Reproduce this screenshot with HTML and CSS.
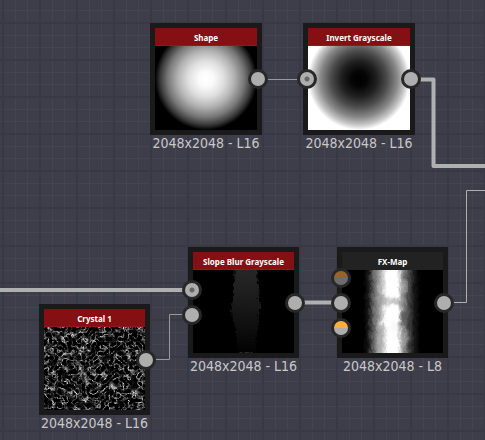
FILE: index.html
```html
<!DOCTYPE html>
<html lang="en">
<head>
<meta charset="utf-8">
<meta name="viewport" content="width=device-width, initial-scale=1">
<title>Node graph</title>
<link rel="stylesheet" href="styles.css">
</head>
<body>
<main class="canvas">
  <svg class="layer" aria-hidden="true">
    <defs>
      <pattern id="grid" x="2" y="22" width="371" height="371" patternUnits="userSpaceOnUse">
        <path class="grid-minor" d="M13.500 0V371M25.500 0V371M50.500 0V371M62.500 0V371M87.500 0V371M99.500 0V371M124.500 0V371M136.500 0V371M161.500 0V371M173.500 0V371M198.500 0V371M210.500 0V371M236.500 0V371M248.500 0V371M273.500 0V371M285.500 0V371M310.500 0V371M322.500 0V371M347.500 0V371M359.500 0V371M0 13.500H371M0 25.500H371M0 50.500H371M0 62.500H371M0 87.500H371M0 99.500H371M0 124.500H371M0 136.500H371M0 161.500H371M0 173.500H371M0 198.500H371M0 210.500H371M0 236.500H371M0 248.500H371M0 273.500H371M0 285.500H371M0 310.500H371M0 322.500H371M0 347.500H371M0 359.500H371"/>
        <path class="grid-major" d="M1 0V371M38 0V371M75 0V371M112 0V371M149 0V371M186 0V371M224 0V371M261 0V371M298 0V371M335 0V371M0 1H371M0 38H371M0 75H371M0 112H371M0 149H371M0 186H371M0 224H371M0 261H371M0 298H371M0 335H371"/>
      </pattern>
    </defs>
    <rect width="100%" height="100%" fill="url(#grid)"/>
    <path class="wire" d="M257 79.500H308"/>
    <path class="wire wire-thick" d="M410 79.500H433.500V166H2000"/>
    <path class="wire wire-thick" d="M0 290H192"/>
    <path class="wire" d="M146 359.500H169.500V314.500H192"/>
    <path class="wire wire-thick" d="M294 302.500H341"/>
    <path class="wire wire-light" d="M443 302.500H466.500V190.500H2000"/>
  </svg>

  <article class="node node-shape">
    <div class="body">
      <svg class="preview" viewBox="0 0 102 102" aria-hidden="true">
        <defs><radialGradient id="ball"><stop offset="0" stop-color="#fff"/><stop offset=".15" stop-color="#fafafa"/><stop offset=".35" stop-color="#dfdfdf"/><stop offset=".55" stop-color="#b3b3b3"/><stop offset=".75" stop-color="#777"/><stop offset=".9" stop-color="#383838"/><stop offset="1" stop-color="#000"/></radialGradient></defs>
        <rect width="102" height="102" fill="#000"/><circle cx="51" cy="51" r="51" fill="url(#ball)"/>
      </svg>
      <h2 class="title">Shape</h2>
    </div>
    <div class="ports outputs"><button class="port" type="button" aria-label="Output"></button></div>
    <p class="info">2048x2048 - L16</p>
  </article>

  <article class="node node-invert">
    <div class="body">
      <svg class="preview" viewBox="0 0 102 102" aria-hidden="true">
        <defs><radialGradient id="hole"><stop offset="0" stop-color="#000"/><stop offset=".15" stop-color="#050505"/><stop offset=".35" stop-color="#202020"/><stop offset=".55" stop-color="#4c4c4c"/><stop offset=".75" stop-color="#888"/><stop offset=".9" stop-color="#c7c7c7"/><stop offset="1" stop-color="#fff"/></radialGradient></defs>
        <rect width="102" height="102" fill="#fff"/><circle cx="51" cy="51" r="51" fill="url(#hole)"/>
      </svg>
      <h2 class="title">Invert Grayscale</h2>
    </div>
    <div class="ports inputs"><button class="port port-primary" type="button" aria-label="Input"></button></div>
    <div class="ports outputs"><button class="port" type="button" aria-label="Output"></button></div>
    <p class="info">2048x2048 - L16</p>
  </article>

  <article class="node node-small node-blur">
    <div class="body">
      <svg class="preview" viewBox="0 0 102 102" aria-hidden="true">
        <defs>
          <linearGradient id="dim" x2="0" y2="1"><stop offset="0" stop-color="#2c2c2c"/><stop offset=".35" stop-color="#202020"/><stop offset=".7" stop-color="#101010"/><stop offset="1" stop-color="#010101"/></linearGradient>
          <filter id="ragged" x="-20%" width="140%" color-interpolation-filters="sRGB"><feTurbulence baseFrequency=".3" numOctaves="2" seed="4"/><feDisplacementMap in="SourceGraphic" scale="5" xChannelSelector="R" yChannelSelector="G"/></filter>
        </defs>
        <rect width="102" height="102" fill="#000"/>
        <path fill="url(#dim)" filter="url(#ragged)" d="M42 0H63L64 25L66 45L67 55L65 68L63 85L62 102H44L42 80L38 62L37 55L40 40Z"/>
        <path stroke="#292929" stroke-dasharray="3 2 5 1" d="M47 101.500H60"/>
      </svg>
      <h2 class="title">Slope Blur Grayscale</h2>
    </div>
    <div class="ports inputs"><button class="port port-primary" type="button" aria-label="Grayscale input"></button><button class="port" type="button" aria-label="Slope input"></button></div>
    <div class="ports outputs"><button class="port" type="button" aria-label="Output"></button></div>
    <p class="info">2048x2048 - L16</p>
  </article>

  <article class="node node-small node-fx">
    <div class="body">
      <svg class="preview" viewBox="0 0 102 102" aria-hidden="true">
        <defs>
          <linearGradient id="beam"><stop offset=".27" stop-color="#000"/><stop offset=".31" stop-color="#181818"/><stop offset=".35" stop-color="#606060"/><stop offset=".41" stop-color="#b4b4b4"/><stop offset=".46" stop-color="#fff"/><stop offset=".55" stop-color="#fff"/><stop offset=".59" stop-color="#9c9c9c"/><stop offset=".64" stop-color="#4c4c4c"/><stop offset=".69" stop-color="#151515"/><stop offset=".74" stop-color="#000"/></linearGradient>
          <filter id="rough" x="0" y="0" width="1" height="1" color-interpolation-filters="sRGB"><feTurbulence baseFrequency=".2 .1" numOctaves="2" seed="9"/><feDisplacementMap in="SourceGraphic" scale="4" xChannelSelector="R" yChannelSelector="G"/></filter>
          <filter id="soft" x="-50%" y="-50%" width="200%" height="200%"><feGaussianBlur stdDeviation="1.500"/></filter>
        </defs>
        <rect width="102" height="102" fill="#000"/>
        <g filter="url(#rough)">
          <rect x="-12" y="-10" width="122" height="122" fill="url(#beam)"/>
          <path fill="#888" opacity=".5" filter="url(#soft)" d="M36 44H46V53H36ZM47 46H62V53H47ZM50 68L57 72V78H48Z"/>
          <path fill="#fff" opacity=".9" filter="url(#soft)" d="M44 56L55 53L56 72L58 102H45L43 84L46 76L36 70L44 66Z"/>
          <path fill="#aaa" opacity=".5" filter="url(#soft)" d="M35 71L43 76L42 102H33ZM59 28H64V40H59ZM57 78H65V96H58Z"/>
          <path fill="#4a4a4a" opacity=".6" filter="url(#soft)" d="M58 58H65V73H58Z"/>
        </g>
      </svg>
      <h2 class="title title-dark">FX-Map</h2>
    </div>
    <div class="ports inputs"><button class="port port-mixed-dim" type="button" aria-label="Background input"></button><button class="port" type="button" aria-label="Pattern input 1"></button><button class="port port-mixed" type="button" aria-label="Pattern input 2"></button></div>
    <div class="ports outputs"><button class="port" type="button" aria-label="Output"></button></div>
    <p class="info">2048x2048 - L8</p>
  </article>

  <article class="node node-small node-crystal">
    <div class="body">
      <svg class="preview" viewBox="0 0 102 102" aria-hidden="true">
        <filter id="crystal" x="0" y="0" width="1" height="1" color-interpolation-filters="sRGB">
          <feTurbulence type="turbulence" baseFrequency=".21" numOctaves="2" seed="7"/>
          <feColorMatrix values="-2.500 0 0 0 .8  -2.500 0 0 0 .8  -2.500 0 0 0 .8  0 0 0 0 1" result="lines"/>
          <feTurbulence type="fractalNoise" baseFrequency=".17" numOctaves="3" seed="21"/>
          <feColorMatrix values="0 3 0 0 -1.050  0 3 0 0 -1.050  0 3 0 0 -1.050  0 0 0 0 1" result="mask"/>
          <feComposite in="lines" in2="mask" operator="arithmetic" k1=".95" k2=".16" k3="0" k4="0"/>
        </filter>
        <rect width="102" height="102" filter="url(#crystal)"/>
      </svg>
      <h2 class="title">Crystal 1</h2>
    </div>
    <div class="ports outputs"><button class="port" type="button" aria-label="Output"></button></div>
    <p class="info">2048x2048 - L16</p>
  </article>
</main>
</body>
</html>
```
FILE: styles.css
```css
* {
  box-sizing: border-box;
}

body {
  margin: 0;
  background: #3e3d4a;
}

.canvas {
  position: relative;
  min-height: 100vh;
  overflow: hidden;
  font-family: "Noto Sans", "Open Sans", sans-serif;
}

.layer {
  position: absolute;
  inset: 0;
  width: 100%;
  height: 100%;
}

.grid-minor,
.grid-major {
  fill: none;
  stroke: #454450;
  stroke-width: 1;
}

.grid-major {
  stroke: #393845;
  stroke-width: 2;
}

.wire {
  fill: none;
  stroke: #98989e;
  stroke-width: 1;
  stroke-linejoin: round;
}

.wire-light {
  stroke: #b0b0b0;
}

.wire-thick {
  stroke: #b0b0b0;
  stroke-width: 4;
}

/* Nodes are placed freely on the canvas */
.node {
  --size: 112px;
  position: absolute;
  width: var(--size);
}

.node-small {
  --size: 111px;
}

.node-shape { left: 150px; top: 23px; }
.node-invert { left: 303px; top: 23px; }
.node-blur { left: 188px; top: 247px; }
.node-fx { left: 337px; top: 247px; }
.node-crystal { left: 39px; top: 304px; }

.body {
  position: relative;
  height: var(--size);
  border: 5px solid #1a1a1a;
}

.preview {
  display: block;
  width: 100%;
  height: 100%;
}

.title {
  position: absolute;
  inset: 0 0 auto;
  height: 18px;
  margin: 0;
  border-bottom: 1px solid #8c1a1f;
  background: #850f13;
  color: #fff;
  font-size: 8px;
  line-height: 20px;
  font-weight: 700;
  text-align: center;
  white-space: nowrap;
}

.title-dark {
  border-color: #222;
  background: #222;
}

.ports {
  position: absolute;
  top: 0;
  height: var(--size);
  display: flex;
  flex-direction: column;
  justify-content: center;
  gap: 5px;
}

.inputs { left: -6px; }
.outputs { right: -6px; }

.port {
  width: 20px;
  height: 20px;
  padding: 0;
  border: 3px solid #282828;
  border-radius: 50%;
  background: #aeaeae;
}

.port-primary {
  background: radial-gradient(circle, #666 2px, #aeaeae 3px);
}

.port-mixed {
  background: linear-gradient(#ffae3d 50%, #aeaeae 50%);
}

.port-mixed-dim {
  background: linear-gradient(#946626 50%, #6c6c6c 50%);
}

.info {
  margin: 0;
  color: #c8c8c8;
  font-family: "DejaVu Sans Condensed", "DejaVu Sans", sans-serif;
  font-size: 14px;
  line-height: 17px;
  text-align: center;
  white-space: nowrap;
}
```
